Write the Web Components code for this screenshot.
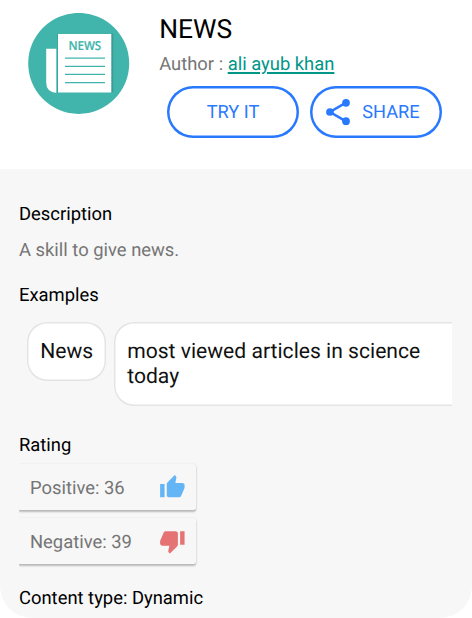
<!DOCTYPE html>
<html lang="en">
<head>
<meta charset="utf-8">
<title>NEWS</title>
<style>
html, body { margin: 0; background: #fff; }
body { font-family: Roboto, "Liberation Sans", sans-serif; color: #000; width: 472px; height: 618px; overflow: hidden; text-rendering: geometricPrecision; }
</style>
</head>
<body>
<skill-page></skill-page>
<script>
function define(name, html) {
  customElements.define(name, class extends HTMLElement {
    constructor() {
      super();
      this.attachShadow({ mode: 'open' }).innerHTML = html;
    }
  });
}

define('news-logo', `
<style>
:host { display: block; width: 102px; height: 102px; }
svg { display: block; }
</style>
<svg width="102" height="102" viewBox="28 13 102 102">
  <circle cx="78.700" cy="63.400" r="50.500" fill="#41b5ab"/>
  <path d="M57 33.500H58V92.700H57Z" fill="#37a69c"/>
  <path d="M111 33.500H113.300V92.300H111Z" fill="#3a9d95"/>
  <path d="M46.200 48.800H56.300V92.700H55.500Q46.200 91.500 46.200 82.500Z" fill="#fff"/>
  <path d="M58 34H111.300V92.500H58Z" fill="#fff"/>
  <path d="M65 58.100H105M65 66.300H105M65 74.400H105M65 82.600H105" stroke="#41b5ab" stroke-width="1.300"/>
  <text x="68.400" y="50" textLength="32.800" lengthAdjust="spacingAndGlyphs" font-family="'Open Sans', sans-serif" font-weight="600" font-size="12.400" fill="#41b5ab" stroke="#41b5ab" stroke-width=".2">NEWS</text>
</svg>`);

define('share-icon', `
<style>:host { display: block; width: 32px; height: 32px; } svg { display: block; }</style>
<svg width="32" height="32" viewBox="0 0 24 24" fill="#2979ff">
  <path d="M18 5L6 12L18 19" fill="none" stroke="#2979ff" stroke-width="1.900"/>
  <circle cx="18" cy="5.100" r="2.900"/><circle cx="6" cy="12" r="2.900"/><circle cx="18" cy="18.900" r="2.900"/>
</svg>`);

define('thumb-up-icon', `
<style>:host { display: block; } svg { display: block; }</style>
<svg width="26.700" height="26.700" viewBox="0 0 24 24" fill="#64b5f6">
  <path d="M1 21h4V9H1v12zm22-11c0-1.100-.9-2-2-2h-6.310l.95-4.570.03-.32c0-.41-.17-.79-.44-1.060L14.170 1 7.590 7.590C7.220 7.950 7 8.450 7 9v10c0 1.100.9 2 2 2h9c.83 0 1.540-.5 1.840-1.220l3.020-7.050c.09-.23.14-.47.14-.73v-2z"/>
</svg>`);

define('thumb-down-icon', `
<style>:host { display: block; } svg { display: block; }</style>
<svg width="26.700" height="26.700" viewBox="0 0 24 24" fill="#e57373">
  <path d="M15 3H6c-.83 0-1.540.5-1.840 1.220l-3.020 7.050c-.09.23-.14.47-.14.73v2c0 1.100.9 2 2 2h6.310l-.95 4.570-.03.32c0 .41.17.79.44 1.060L9.830 23l6.590-6.590c.36-.36.58-.86.58-1.410V5c0-1.100-.9-2-2-2zm4 0v12h4V3h-4z"/>
</svg>`);

define('pill-button', `
<style>
:host { display: flex; box-sizing: border-box; width: 132px; height: 52.500px; border-radius: 26.250px; box-shadow: inset 0 0 0 2.500px #2979ff;
  align-items: center; justify-content: center; gap: 8px; color: #2979ff; font-size: 18.200px; line-height: 22px; }
::slotted(span) { padding-top: 2px; }
</style>
<slot></slot>`);

define('skill-header', `
<style>
:host { display: flex; box-sizing: border-box; height: 169px; padding: 13px 0 0 28px; background: #fff; }
.info { margin-left: 29.200px; padding-top: 1px; }
h1 { margin: 0; font-weight: 400; font-size: 26.400px; line-height: 32px; }
.author { margin-top: 8px; font-size: 18.400px; line-height: 22px; color: #757575; white-space: pre; }
a { color: #009688; text-decoration: underline; text-decoration-thickness: 1.500px; text-underline-offset: 2px; }
.buttons { display: flex; gap: 11px; margin: 9.500px 0 0 7.800px; }
.share { padding-right: 10px; }
</style>
<news-logo></news-logo>
<div class="info">
  <h1>NEWS</h1>
  <div class="author">Author : <a>ali ayub khan</a></div>
  <div class="buttons">
    <pill-button><span>TRY IT</span></pill-button>
    <pill-button class="share"><share-icon></share-icon><span>SHARE</span></pill-button>
  </div>
</div>`);

define('section-title', `
<style>:host { display: block; font-size: 18.400px; line-height: 22px; color: #000; }</style>
<slot></slot>`);

define('example-card', `
<style>
:host { display: block; flex: none; box-sizing: border-box; box-shadow: inset 0 0 0 1.500px #e4e4e4; border-radius: 20px; background: #fff;
  padding: 17px 13.200px 15px; font-size: 21.100px; line-height: 25px; color: #111; }
</style>
<slot></slot>`);

define('rating-card', `
<style>
:host { display: flex; box-sizing: border-box; width: 178px; height: 46px; align-items: center; justify-content: space-between;
  padding: 0 10px 0 12px; border-radius: 2.500px; background: #f7f7f7; color: #757575; font-size: 18.400px; line-height: 22px;
  box-shadow: 0 2px 2px rgba(0,0,0,.24), 0 0 2px rgba(0,0,0,.1); }
::slotted(span) { padding-top: 4px; }
</style>
<slot></slot>`);

define('skill-details', `
<style>
:host { display: block; box-sizing: border-box; height: 449px; padding: 35px 20px 0 19px; background: #f7f7f7; border-radius: 0 0 32px 32px; }
p { margin: 14px 0 23px; font-size: 18.400px; line-height: 22px; color: #757575; }
.examples { display: flex; align-items: flex-start; gap: 8px; margin: 15px 0 29px; padding-left: 8px; height: 84px; overflow: hidden; }
.first { width: 79px; height: 58.500px; }
.second { width: 370px; height: 83.500px; }
.ratings { display: flex; flex-direction: column; gap: 8px; box-sizing: border-box; height: 131px; padding-top: 7px; overflow: hidden; }
rating-card { margin-left: -1px; flex: none; }
</style>
<section-title>Description</section-title>
<p>A skill to give news.</p>
<section-title>Examples</section-title>
<div class="examples">
  <example-card class="first">News</example-card>
  <example-card class="second">most viewed articles in science<br>today</example-card>
</div>
<section-title>Rating</section-title>
<div class="ratings">
  <rating-card><span>Positive: 36</span><thumb-up-icon></thumb-up-icon></rating-card>
  <rating-card><span>Negative: 39</span><thumb-down-icon></thumb-down-icon></rating-card>
</div>
<section-title>Content type: Dynamic</section-title>`);

define('skill-page', `
<style>:host { display: block; width: 472px; height: 618px; background: #fff; }</style>
<skill-header></skill-header>
<skill-details></skill-details>`);
</script>
</body>
</html>
